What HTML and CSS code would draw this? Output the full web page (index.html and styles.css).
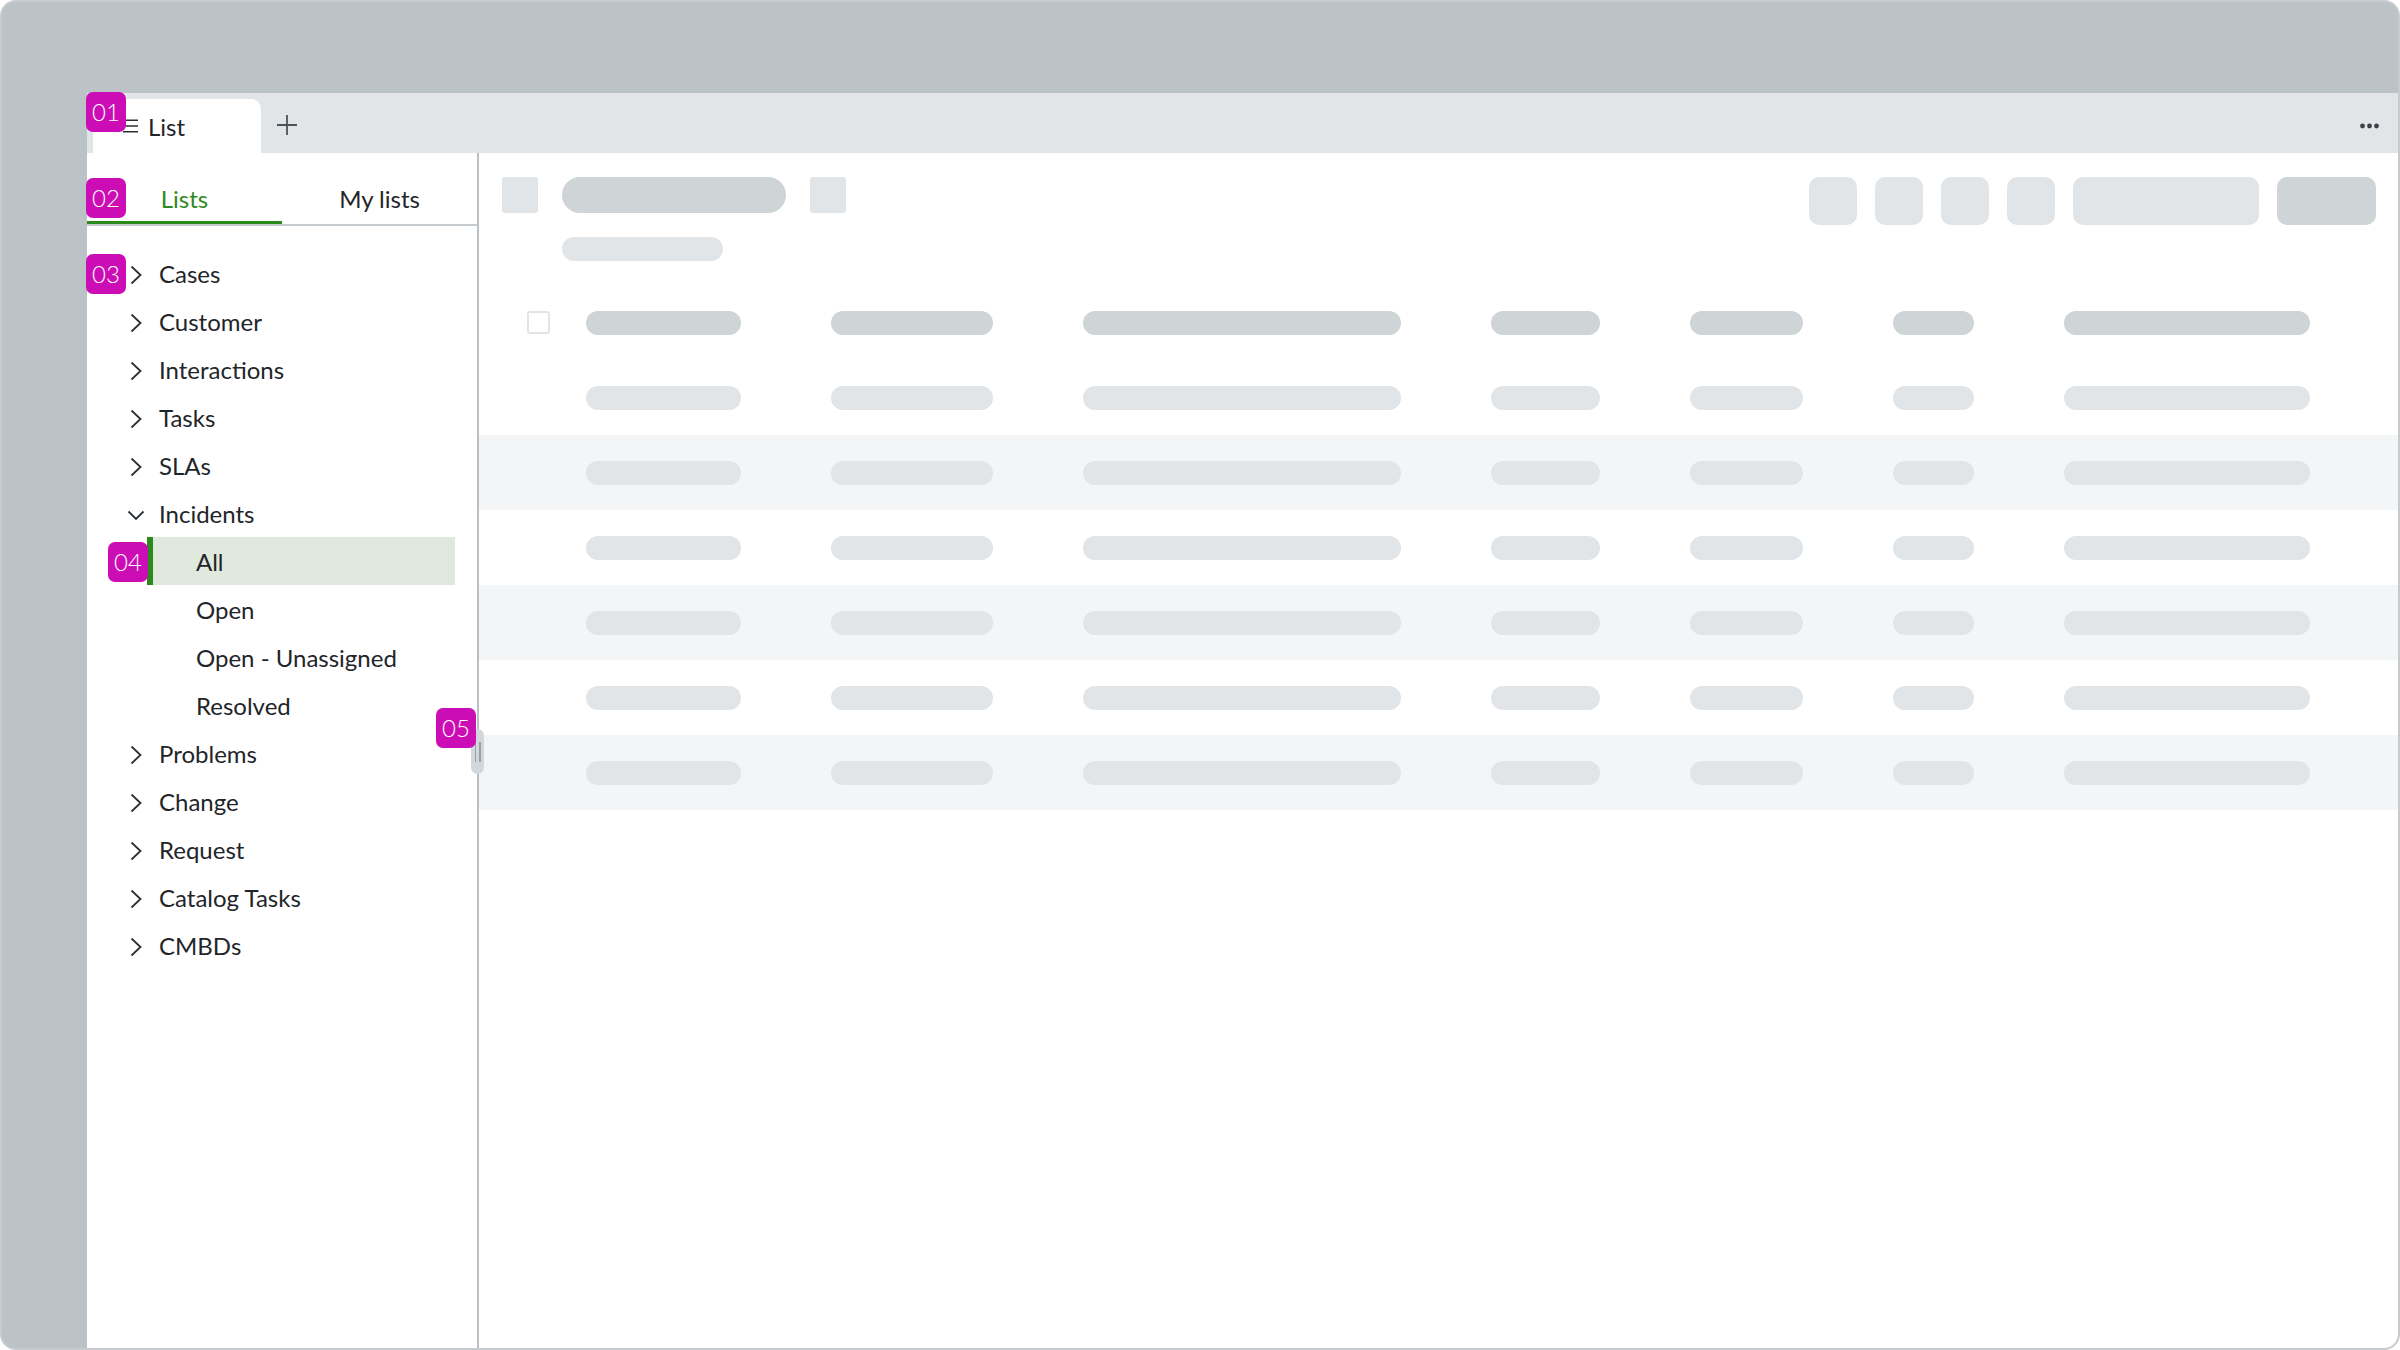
FILE: index.html
```html
<!DOCTYPE html>
<html lang="en">
<head>
    <meta charset="UTF-8">
    <title>List</title>
    <link rel="stylesheet" href="styles.css">
</head>
<body>
    <div class="frame">
        <div class="window">
            <div class="tabbar">
                <div class="tab">
                    <svg class="tab-icon" width="15" height="14" viewBox="0 0 15 14">
                        <path d="M0 1.2H15M0 7H15M0 12.8H15" stroke="#2b3135" stroke-width="1.6" fill="none"/>
                    </svg>
                    <span>List</span>
                </div>
                <div class="tab-add">
                    <svg width="20" height="20" viewBox="0 0 20 20">
                        <path d="M10 0V20M0 10H20" stroke="#4b5257" stroke-width="1.8" fill="none"/>
                    </svg>
                </div>
                <div class="tab-more">
                    <svg width="19" height="6" viewBox="0 0 19 6">
                        <circle cx="2.5" cy="3" r="2.4" fill="#3b4247"/>
                        <circle cx="9.5" cy="3" r="2.4" fill="#3b4247"/>
                        <circle cx="16.5" cy="3" r="2.4" fill="#3b4247"/>
                    </svg>
                </div>
            </div>

            <div class="workspace">
                <aside class="sidebar">
                    <div class="subtabs">
                        <div class="subtab active">Lists</div>
                        <div class="subtab">My lists</div>
                    </div>
                    <ul class="tree">
                        <li class="node"><svg class="chev" viewBox="0 0 24 24"><path d="M7.5 3.5L16.5 12L7.5 20.5"/></svg>Cases</li>
                        <li class="node"><svg class="chev" viewBox="0 0 24 24"><path d="M7.5 3.5L16.5 12L7.5 20.5"/></svg>Customer</li>
                        <li class="node"><svg class="chev" viewBox="0 0 24 24"><path d="M7.5 3.5L16.5 12L7.5 20.5"/></svg>Interactions</li>
                        <li class="node"><svg class="chev" viewBox="0 0 24 24"><path d="M7.5 3.5L16.5 12L7.5 20.5"/></svg>Tasks</li>
                        <li class="node"><svg class="chev" viewBox="0 0 24 24"><path d="M7.5 3.5L16.5 12L7.5 20.5"/></svg>SLAs</li>
                        <li class="node"><svg class="chev" viewBox="0 0 24 24"><path d="M4.5 8.5L12 16L19.5 8.5"/></svg>Incidents</li>
                        <li class="leaf selected">All</li>
                        <li class="leaf">Open</li>
                        <li class="leaf">Open - Unassigned</li>
                        <li class="leaf">Resolved</li>
                        <li class="node"><svg class="chev" viewBox="0 0 24 24"><path d="M7.5 3.5L16.5 12L7.5 20.5"/></svg>Problems</li>
                        <li class="node"><svg class="chev" viewBox="0 0 24 24"><path d="M7.5 3.5L16.5 12L7.5 20.5"/></svg>Change</li>
                        <li class="node"><svg class="chev" viewBox="0 0 24 24"><path d="M7.5 3.5L16.5 12L7.5 20.5"/></svg>Request</li>
                        <li class="node"><svg class="chev" viewBox="0 0 24 24"><path d="M7.5 3.5L16.5 12L7.5 20.5"/></svg>Catalog Tasks</li>
                        <li class="node"><svg class="chev" viewBox="0 0 24 24"><path d="M7.5 3.5L16.5 12L7.5 20.5"/></svg>CMBDs</li>
                    </ul>
                </aside>

                <main class="content">
                    <div class="toolbar">
                        <div class="title-block">
                            <div class="title-row">
                                <div class="sk sq"></div>
                                <div class="sk title-pill"></div>
                                <div class="sk sq"></div>
                            </div>
                            <div class="sk sub-pill"></div>
                        </div>
                        <div class="actions">
                            <div class="sk btn"></div>
                            <div class="sk btn"></div>
                            <div class="sk btn"></div>
                            <div class="sk btn"></div>
                            <div class="sk btn wide"></div>
                            <div class="sk btn primary"></div>
                        </div>
                    </div>

                    <div class="table">
                        <div class="row head">
                            <div class="check"></div>
                            <div class="bar c1"></div><div class="bar c2"></div><div class="bar c3"></div><div class="bar c4"></div><div class="bar c5"></div><div class="bar c6"></div><div class="bar c7"></div>
                        </div>
                        <div class="row">
                            <div class="check empty"></div>
                            <div class="bar c1"></div><div class="bar c2"></div><div class="bar c3"></div><div class="bar c4"></div><div class="bar c5"></div><div class="bar c6"></div><div class="bar c7"></div>
                        </div>
                        <div class="row striped">
                            <div class="check empty"></div>
                            <div class="bar c1"></div><div class="bar c2"></div><div class="bar c3"></div><div class="bar c4"></div><div class="bar c5"></div><div class="bar c6"></div><div class="bar c7"></div>
                        </div>
                        <div class="row">
                            <div class="check empty"></div>
                            <div class="bar c1"></div><div class="bar c2"></div><div class="bar c3"></div><div class="bar c4"></div><div class="bar c5"></div><div class="bar c6"></div><div class="bar c7"></div>
                        </div>
                        <div class="row striped">
                            <div class="check empty"></div>
                            <div class="bar c1"></div><div class="bar c2"></div><div class="bar c3"></div><div class="bar c4"></div><div class="bar c5"></div><div class="bar c6"></div><div class="bar c7"></div>
                        </div>
                        <div class="row">
                            <div class="check empty"></div>
                            <div class="bar c1"></div><div class="bar c2"></div><div class="bar c3"></div><div class="bar c4"></div><div class="bar c5"></div><div class="bar c6"></div><div class="bar c7"></div>
                        </div>
                        <div class="row striped">
                            <div class="check empty"></div>
                            <div class="bar c1"></div><div class="bar c2"></div><div class="bar c3"></div><div class="bar c4"></div><div class="bar c5"></div><div class="bar c6"></div><div class="bar c7"></div>
                        </div>
                    </div>
                </main>
            </div>
        </div>

        <!-- resize handle and annotation badges sit on top of the layout -->
        <div class="resizer"><span></span><span></span></div>
        <div class="badge b1">01</div>
        <div class="badge b2">02</div>
        <div class="badge b3">03</div>
        <div class="badge b4">04</div>
        <div class="badge b5">05</div>
    </div>
</body>
</html>
```

FILE: styles.css
```css
html, body { margin: 0; padding: 0; background: #ffffff; }
body { font-family: Lato, "Liberation Sans", sans-serif; color: #1f2529; }

.frame {
    position: relative;
    box-sizing: border-box;
    width: 2400px;
    height: 1350px;
    border: 2px solid #c6cbce;
    border-radius: 16px;
    background: #bcc3c6;
    overflow: hidden;
    padding: 91px 0 0 85px;
}
.window { display: flex; flex-direction: column; height: 100%; }

/* top tab strip */
.tabbar { display: flex; align-items: flex-end; height: 60px; flex-shrink: 0; background: #e1e5e8; padding-left: 6px; }
.tab { display: flex; align-items: center; gap: 10px; box-sizing: border-box; width: 168px; height: 54px; padding-left: 30px; background: #fff; border-radius: 10px 10px 0 0; font-size: 24px; }
.tab span { margin-top: 1px; }
.tab-add { align-self: center; display: flex; margin: 4px 0 0 16px; }
.tab-more { align-self: center; display: flex; margin: 6px 19px 0 auto; }

.workspace { display: flex; flex: 1; background: #fff; }

/* sidebar */
.sidebar { width: 390px; flex-shrink: 0; border-right: 2px solid #b9bfc3; }
.subtabs { display: flex; margin-top: 24px; border-bottom: 2px solid #c6cbcf; }
.subtab { flex: 1; height: 47px; line-height: 44px; text-align: center; font-size: 24px; }
.subtab.active { color: #2f8a20; box-shadow: inset 0 -3px 0 #2a8a1c; }

.tree { list-style: none; margin: 0; padding: 23px 0 0 0; font-size: 24px; }
.node { display: flex; align-items: center; height: 48px; padding-left: 37px; }
.chev { width: 24px; height: 24px; margin: 3px 11px 0 0; fill: none; stroke: #2b3135; stroke-width: 1.8; }
.leaf { display: flex; align-items: center; height: 48px; margin: 0 22px 0 60px; padding-left: 49px; }
.leaf.selected { background: #e0e9de; border-left: 6px solid #2a8a1c; padding-left: 43px; }

/* main list area */
.content { flex: 1; }
.sk { background: #e1e5e8; }
.toolbar { display: flex; justify-content: space-between; align-items: flex-start; padding: 24px 22px 0 23px; }
.title-row { display: flex; gap: 24px; }
.sq { width: 36px; height: 36px; border-radius: 3px; }
.title-pill { width: 224px; height: 36px; border-radius: 18px; background: #cfd4d7; }
.sub-pill { width: 161px; height: 24px; border-radius: 12px; margin: 24px 0 0 60px; }
.actions { display: flex; gap: 18px; }
.btn { width: 48px; height: 48px; border-radius: 10px; }
.btn.wide { width: 186px; }
.btn.primary { width: 99px; background: #cfd4d7; }

.table { margin-top: 24px; }
.row { display: flex; align-items: center; height: 75px; padding-left: 48px; }
.row.striped { background: #f4f5f7; }
.check { box-sizing: border-box; width: 23px; height: 23px; margin-right: 36px; border: 2px solid #e1e5e8; border-radius: 3px; }
.check.empty { border: none; }
.bar { height: 24px; border-radius: 12px; background: #e1e5e8; }
.bar + .bar { margin-left: 90px; }
.head .bar { background: #cfd4d7; }
.c1 { width: 155px; }
.c2 { width: 162px; }
.c3 { width: 318px; }
.c4 { width: 109px; }
.c5 { width: 113px; }
.c6 { width: 81px; }
.c7 { width: 246px; }

/* splitter grip */
.resizer { position: absolute; left: 469px; top: 727px; width: 13px; height: 45px; border-radius: 7px; background: #d3d7db; display: flex; justify-content: center; align-items: center; gap: 3px; }
.resizer span { width: 1.5px; height: 20px; background: #9aa1a6; }

/* annotation badges */
.badge { position: absolute; width: 40px; height: 40px; border-radius: 7px; background: #cc0db6; color: #fff; font-family: Lato, "Open Sans", sans-serif; font-weight: 300; font-size: 24px; line-height: 40px; text-align: center; }
.b1 { left: 84px; top: 90px; }
.b2 { left: 84px; top: 176px; }
.b3 { left: 84px; top: 252px; }
.b4 { left: 106px; top: 540px; }
.b5 { left: 434px; top: 706px; }
```
